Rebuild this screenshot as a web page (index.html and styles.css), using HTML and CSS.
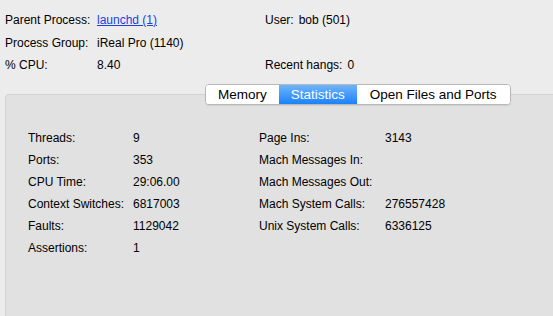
FILE: index.html
```html
<!DOCTYPE html>
<html lang="en">
<head>
    <meta charset="UTF-8">
    <meta name="viewport" content="width=device-width, initial-scale=1.0">
    <title>Process Info</title>
    <link rel="stylesheet" href="styles.css">
</head>
<body>
    <div class="summary">
        <div class="summary_col">
            <div class="row"><span class="label">Parent Process:</span><a class="proc-link" href="#">launchd (1)</a></div>
            <div class="row"><span class="label">Process Group:</span><span>iReal Pro (1140)</span></div>
            <div class="row"><span class="label">% CPU:</span><span>8.40</span></div>
        </div>
        <div class="summary_col right">
            <div class="row"><span class="label_short">User:</span><span>bob (501)</span></div>
            <div class="row"></div>
            <div class="row"><span class="label_short">Recent hangs:</span><span>0</span></div>
        </div>
    </div>

    <div class="panel">
        <div class="tabs">
            <button type="button" class="tab">Memory</button>
            <button type="button" class="tab selected">Statistics</button>
            <button type="button" class="tab wide">Open Files and Ports</button>
        </div>

        <div class="stats">
            <span>Threads:</span><span>9</span><span>Page Ins:</span><span>3143</span>
            <span>Ports:</span><span>353</span><span>Mach Messages In:</span><span></span>
            <span>CPU Time:</span><span>29:06.00</span><span>Mach Messages Out:</span><span></span>
            <span>Context Switches:</span><span>6817003</span><span>Mach System Calls:</span><span>276557428</span>
            <span>Faults:</span><span>1129042</span><span>Unix System Calls:</span><span>6336125</span>
            <span>Assertions:</span><span>1</span><span></span><span></span>
        </div>
    </div>
</body>
</html>
```

FILE: styles.css
```css
body {
    font-family: "Liberation Sans", Arial, sans-serif;
    font-size: 12px;
    color: #000;
    background-color: #ececec;
    margin: 0;
    height: 316px;
    overflow: hidden;
    display: flex;
    flex-direction: column;
}
.summary {
    display: flex;
    padding: 9px 0 0 5px;
}
.summary_col {
    width: 260px;
}
.row {
    display: flex;
    height: 22.5px;
    line-height: 22px;
}
.label {
    width: 92px;
}
.label_short {
    margin-right: 5px;
}
.proc-link {
    color: #1b3fe0;
    text-decoration: underline;
}
.panel {
    flex: 1;
    margin: 17.5px -10px -10px 5px;
    background-color: #e1e1e1;
    border: 1px solid #d3d3d3;
    border-radius: 4px;
}
.tabs {
    display: flex;
    margin: -11px 0 0 199px;
    width: max-content;
    border: 1px solid #b8b8b8;
    border-radius: 4px;
    overflow: hidden;
    background-color: white;
    box-shadow: 0 1px 1px rgba(0, 0, 0, 0.08);
}
.tab {
    font-family: "Liberation Sans", Arial, sans-serif;
    font-size: 13.5px;
    height: 19px;
    padding: 0 12px;
    border: none;
    background: white;
    color: #000;
    line-height: 19px;
}
.tab.wide {
    padding: 0 13px;
}
.tab.selected {
    background: linear-gradient(#6fb4fb, #1b82fb);
    color: white;
}
.stats {
    display: grid;
    grid-template-columns: 105px 126px 126px auto;
    grid-auto-rows: 22px;
    line-height: 22px;
    padding: 22px 0 0 22px;
}
```
